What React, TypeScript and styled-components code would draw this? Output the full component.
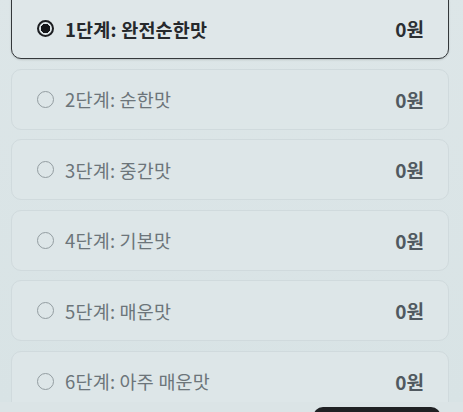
import React, { useState } from "react";
import styled, { createGlobalStyle } from "styled-components";

const GlobalStyle = createGlobalStyle`
  html, body {
    margin: 0;
    padding: 0;
    background: #dbe4e6;
    font-family: "Noto Sans CJK KR", "Noto Sans", sans-serif;
    overflow: hidden;
  }
`;

const levels = [
  { id: 1, label: "1단계: 완전순한맛", price: "0원" },
  { id: 2, label: "2단계: 순한맛", price: "0원" },
  { id: 3, label: "3단계: 중간맛", price: "0원" },
  { id: 4, label: "4단계: 기본맛", price: "0원" },
  { id: 5, label: "5단계: 매운맛", price: "0원" },
  { id: 6, label: "6단계: 아주 매운맛", price: "0원" },
];

export default function App() {
  const [selected, setSelected] = useState(1);

  return (
    <Page>
      <GlobalStyle />
      <List>
        {levels.map((l) => (
          <Option
            key={l.id}
            $active={selected === l.id}
            onClick={() => setSelected(l.id)}
          >
            <Radio $active={selected === l.id} />
            <Label $active={selected === l.id}>{l.label}</Label>
            <Price $active={selected === l.id}>{l.price}</Price>
          </Option>
        ))}
      </List>
      <OrderButton />
    </Page>
  );
}

const Page = styled.div`
  width: 463px;
  height: 412px;
  padding: 0 14px 0 11px;
  box-sizing: border-box;
  background: linear-gradient(180deg, #dde6e8 0%, #d8e3e5 100%);
`;

// the list is scrolled a little, so the first card's top edge sits above the view
const List = styled.div`
  display: flex;
  flex-direction: column;
  gap: 9.5px;
  margin-top: -10px;
`;

const Option = styled.div<{ $active: boolean }>`
  display: flex;
  align-items: center;
  height: 61px;
  box-sizing: border-box;
  padding: 0 24px 0 25px;
  border-radius: 10px;
  cursor: pointer;
  background: ${(p) => (p.$active ? "#dfe7e9" : "#dde6e8")};
  border: ${(p) => (p.$active ? "1.5px solid #34383b" : "1px solid #d0dadd")};
  box-shadow: ${(p) => (p.$active ? "0 1px 2px rgba(0,0,0,0.15)" : "none")};

  &:first-child {
    height: 69px;
    padding-top: 8px;
  }
`;

const Radio = styled.span<{ $active: boolean }>`
  width: 17px;
  height: 17px;
  border-radius: 50%;
  box-sizing: border-box;
  flex-shrink: 0;
  border: ${(p) => (p.$active ? "2px solid #1d1f22" : "1.5px solid #939da1")};
  background: ${(p) =>
    p.$active
      ? "radial-gradient(circle, #15171a 0 4.5px, transparent 5px)"
      : "transparent"};
`;

const Label = styled.span<{ $active: boolean }>`
  flex: 1;
  margin-left: 11px;
  font-size: 18.5px;
  letter-spacing: 0.2px;
  font-weight: ${(p) => (p.$active ? 700 : 400)};
  color: ${(p) => (p.$active ? "#26292c" : "#6c757a")};
`;

const Price = styled.span<{ $active: boolean }>`
  font-size: 19px;
  font-weight: 700;
  color: ${(p) => (p.$active ? "#2b2f33" : "#505960")};
`;

const OrderButton = styled.div`
  position: fixed;
  left: 313px;
  top: 407px;
  width: 128px;
  height: 40px;
  border-radius: 10px;
  background: #1f2124;
`;
